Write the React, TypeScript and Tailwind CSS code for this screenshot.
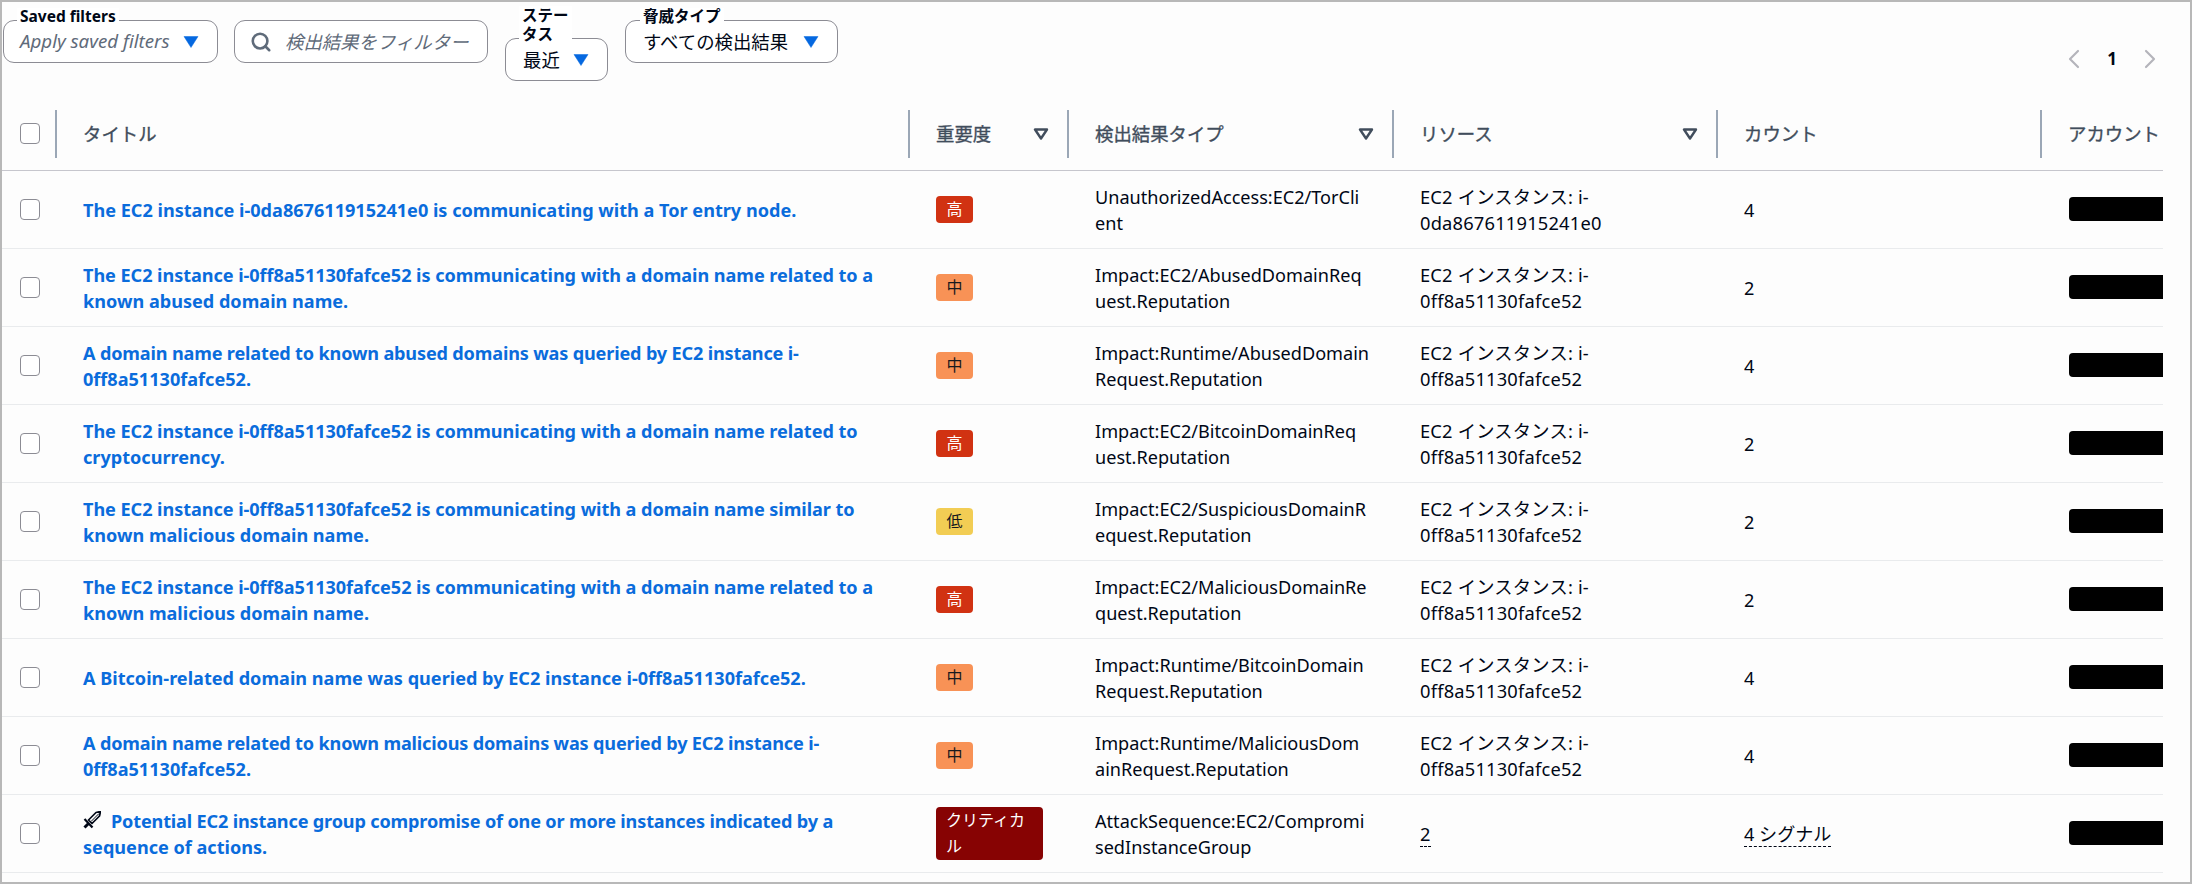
import { Search, ChevronLeft, ChevronRight } from "lucide-react";

const font = "font-['Noto_Sans','Noto_Sans_CJK_JP',sans-serif]";

type Sev = "high" | "mid" | "low" | "crit";

const rows: { title: string; fit?: string; sev: Sev; type: string; res: string; count: string; sword?: boolean }[] = [
  { title: "The EC2 instance i-0da867611915241e0 is communicating with a Tor entry node.", sev: "high", type: "UnauthorizedAccess:EC2/TorCli\nent", res: "EC2 インスタンス: i-\n0da867611915241e0", count: "4" },
  { title: "The EC2 instance i-0ff8a51130fafce52 is communicating with a domain name related to a\nknown abused domain name.", fit: "tracking-[-0.05px]", sev: "mid", type: "Impact:EC2/AbusedDomainReq\nuest.Reputation", res: "EC2 インスタンス: i-\n0ff8a51130fafce52", count: "2" },
  { title: "A domain name related to known abused domains was queried by EC2 instance i-\n0ff8a51130fafce52.", fit: "tracking-[-0.16px]", sev: "mid", type: "Impact:Runtime/AbusedDomain\nRequest.Reputation", res: "EC2 インスタンス: i-\n0ff8a51130fafce52", count: "4" },
  { title: "The EC2 instance i-0ff8a51130fafce52 is communicating with a domain name related to\ncryptocurrency.", fit: "tracking-[-0.05px]", sev: "high", type: "Impact:EC2/BitcoinDomainReq\nuest.Reputation", res: "EC2 インスタンス: i-\n0ff8a51130fafce52", count: "2" },
  { title: "The EC2 instance i-0ff8a51130fafce52 is communicating with a domain name similar to\nknown malicious domain name.", fit: "tracking-[-0.05px]", sev: "low", type: "Impact:EC2/SuspiciousDomainR\nequest.Reputation", res: "EC2 インスタンス: i-\n0ff8a51130fafce52", count: "2" },
  { title: "The EC2 instance i-0ff8a51130fafce52 is communicating with a domain name related to a\nknown malicious domain name.", fit: "tracking-[-0.05px]", sev: "high", type: "Impact:EC2/MaliciousDomainRe\nquest.Reputation", res: "EC2 インスタンス: i-\n0ff8a51130fafce52", count: "2" },
  { title: "A Bitcoin-related domain name was queried by EC2 instance i-0ff8a51130fafce52.", sev: "mid", type: "Impact:Runtime/BitcoinDomain\nRequest.Reputation", res: "EC2 インスタンス: i-\n0ff8a51130fafce52", count: "4" },
  { title: "A domain name related to known malicious domains was queried by EC2 instance i-\n0ff8a51130fafce52.", fit: "tracking-[-0.16px]", sev: "mid", type: "Impact:Runtime/MaliciousDom\nainRequest.Reputation", res: "EC2 インスタンス: i-\n0ff8a51130fafce52", count: "4" },
  { title: "Potential EC2 instance group compromise of one or more instances indicated by a\nsequence of actions.", fit: "tracking-[-0.16px]", sev: "crit", type: "AttackSequence:EC2/Compromi\nsedInstanceGroup", res: "2", count: "4 シグナル", sword: true },
];

function Caret() {
  return (
    <svg width="18" height="12" viewBox="0 0 18 12" className="shrink-0">
      <path d="M2 0.5h14L9 11.5z" fill="#0568e0" stroke="#0568e0" strokeWidth="0.5" strokeLinejoin="round" />
    </svg>
  );
}

function SortIcon() {
  return (
    <svg width="16" height="12" viewBox="0 0 16 12" className="shrink-0">
      <path d="M2 1.5h12L8 10.5z" fill="none" stroke="#414d5c" strokeWidth="2.4" strokeLinejoin="round" />
    </svg>
  );
}

function Checkbox() {
  return <div className="w-5 h-[21px] rounded-[4px] border-[1.5px] border-[#8c8c94] bg-white" />;
}

function Sword() {
  return (
    <svg width="18" height="18" viewBox="0 0 18 18" className="inline-block align-[-1px] mr-[10px]" fill="none" stroke="#000716">
      <path d="M17.5 0.5 13 1.5 5.5 9 9 12.5 16.5 5z" strokeWidth="1.7" strokeLinejoin="round" />
      <path d="M16 2.5 8 10.5" strokeWidth="1" />
      <path d="M1.5 8l8 8.5" strokeWidth="2.2" />
      <path d="M5.5 12.5L1.5 16.5" strokeWidth="3" />
    </svg>
  );
}

function Badge({ sev }: { sev: Sev }) {
  if (sev === "crit")
    return (
      <div className="w-[107px] h-[53px] rounded-[4px] bg-[#870303] text-white text-[16px] leading-[26px] px-[10px] whitespace-pre-line">
        {"クリティカ\nル"}
      </div>
    );
  const styles = {
    high: "bg-[#d13212] text-white",
    mid: "bg-[#f89256] text-[#16191f]",
    low: "bg-[#f2cd54] text-[#16191f]",
  };
  const labels = { high: "高", mid: "中", low: "低" };
  return (
    <div className={`w-[37px] h-[27px] rounded-[4px] text-[16px] leading-[27px] text-center ${styles[sev]}`}>
      {labels[sev]}
    </div>
  );
}

function Box({ className, children }: { className: string; children: React.ReactNode }) {
  return (
    <div className={`h-[43px] rounded-[11px] border border-[#8c8c94] bg-white flex items-center text-[18.4px] ${className}`}>
      {children}
    </div>
  );
}

function Head({ label, sort }: { label: string; sort?: boolean }) {
  return (
    <th className="p-0 pt-[6px] align-top font-normal text-left">
      <div className="h-12 border-l-2 border-[#9ba7b6] pl-[26px] pr-[18px] flex items-center justify-between text-[18.4px] [-webkit-text-stroke:0.35px_#414d5c] text-[#414d5c] whitespace-nowrap">
        <span>{label}</span>
        {sort && <SortIcon />}
      </div>
    </th>
  );
}

export default function App() {
  return (
    <div className={`w-[2192px] h-[884px] overflow-hidden bg-[#fdfdfd] border-2 border-[#b8b8b8] text-[#000716] ${font}`}>
      {/* Filter bar */}
      <div className="flex items-start h-[102px]">
        <div className="ml-px mt-[6px] w-[215px]">
          <span className="relative block w-fit ml-[14px] px-[3px] -mb-[5px] text-[15.5px] leading-[17px] font-bold bg-white z-10">Saved filters</span>
          <Box className="justify-between pl-[16px] pr-[17px] italic text-[#5f6b7a]">
            <span className="text-[18.7px]">Apply saved filters</span>
            <Caret />
          </Box>
        </div>
        <div className="ml-[16px] mt-[18px]">
          <Box className="w-[254px] pl-[15px] italic text-[#5f6b7a]">
            <Search size={22} strokeWidth={2.8} className="text-[#5f6b7a] mr-[13px]" />
            <span>検出結果をフィルター</span>
          </Box>
        </div>
        <div className="ml-[17px] mt-[4px] w-[103px]">
          <span className="relative block w-fit ml-[14px] px-[3px] -mb-[6px] text-[15.5px] leading-[19px] font-bold bg-white z-10">
            ステー
            <br />
            タス
          </span>
          <Box className="justify-between pl-[17px] pr-[17px]">
            <span>最近</span>
            <Caret />
          </Box>
        </div>
        <div className="ml-[17px] mt-[6px] w-[213px]">
          <span className="relative block w-fit ml-[15px] px-[3px] -mb-[5px] text-[15.5px] leading-[17px] font-bold bg-white z-10">脅威タイプ</span>
          <Box className="justify-between pl-[17px] pr-[17px]">
            <span>すべての検出結果</span>
            <Caret />
          </Box>
        </div>
        <div className="ml-auto mr-[24px] mt-[41px] flex items-center gap-[17px] text-[#b4b4bb]">
          <ChevronLeft size={32} strokeWidth={1.6} />
          <span className="text-[17px] font-bold text-[#000716]">1</span>
          <ChevronRight size={32} strokeWidth={1.6} />
        </div>
      </div>

      {/* Findings table */}
      <table className="table-fixed w-[2161px] border-collapse">
        <colgroup>
          <col className="w-[53px]" />
          <col className="w-[853px]" />
          <col className="w-[159px]" />
          <col className="w-[325px]" />
          <col className="w-[324px]" />
          <col className="w-[324px]" />
          <col className="w-[123px]" />
        </colgroup>
        <thead>
          <tr className="h-[66px] border-b-[1.5px] border-[#c6c6cd]">
            <th className="p-0 pl-[18px] pb-[6px]"><Checkbox /></th>
            <Head label="タイトル" />
            <Head label="重要度" sort />
            <Head label="検出結果タイプ" sort />
            <Head label="リソース" sort />
            <Head label="カウント" />
            <Head label="アカウント" />
          </tr>
        </thead>
        <tbody>
          {rows.map((r, i) => {
            const [first, second] = r.title.split("\n");
            return (
              <tr key={i} className="h-[78px] border-b-[1.5px] border-[#e9ebed] text-[18.1px] leading-[26px]">
                <td className="p-0 pl-[18px]"><Checkbox /></td>
                <td className="p-0 pt-[2px] pl-[28px] font-bold text-[#0a6cdc]">
                  {r.sword && <Sword />}
                  <span className={r.fit}>{first}</span>
                  {second && <br />}
                  {second}
                </td>
                <td className="p-0 pl-[28px]"><Badge sev={r.sev} /></td>
                <td className="p-0 pt-[2px] pl-[28px] whitespace-pre-line">{r.type}</td>
                <td className="p-0 pt-[2px] pl-[28px] whitespace-pre-line text-[18.3px] tracking-[0.2px]">
                  {r.sev === "crit" ? <span className="border-b-[1.5px] border-dashed border-[#000716]">{r.res}</span> : r.res}
                </td>
                <td className="p-0 pt-[2px] pl-[28px]">
                  {r.sev === "crit" ? <span className="border-b-[1.5px] border-dashed border-[#000716]">{r.count}</span> : r.count}
                </td>
                <td className="p-0 pl-[29px] overflow-hidden">
                  <div className="w-[120px] h-6 rounded-l-[4px] bg-black" />
                </td>
              </tr>
            );
          })}
        </tbody>
      </table>
    </div>
  );
}
